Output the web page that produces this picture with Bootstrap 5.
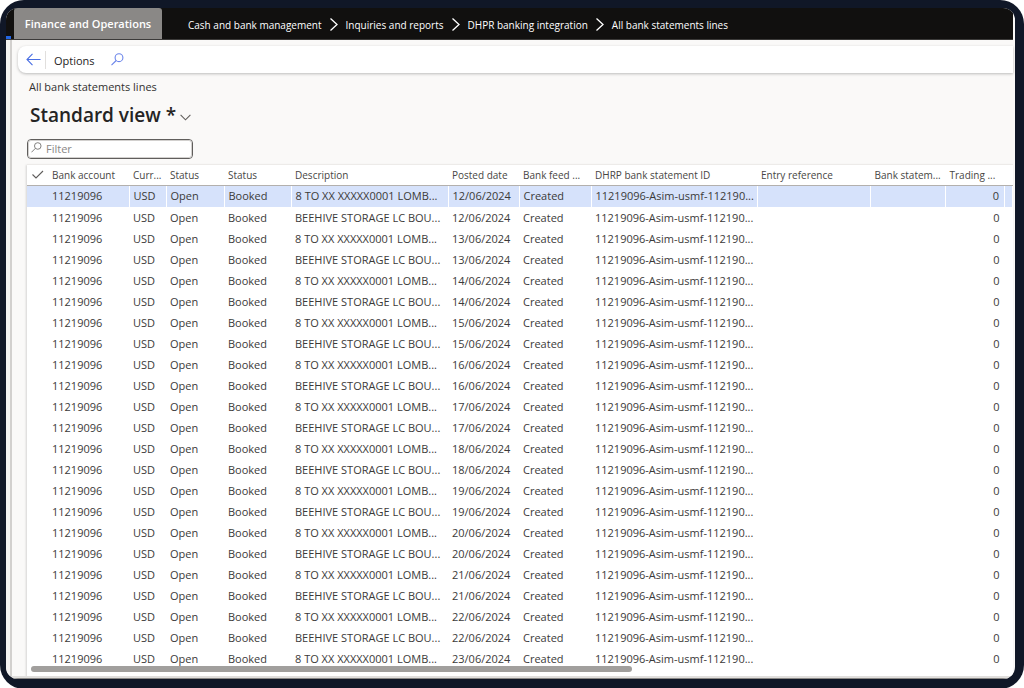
<!DOCTYPE html>
<html lang="en">
<head>
<meta charset="utf-8">
<meta name="viewport" content="width=device-width, initial-scale=1">
<title>All bank statements lines</title>
<link href="https://cdn.jsdelivr.net/npm/bootstrap@5.3.0/dist/css/bootstrap.min.css" rel="stylesheet">
<style>
  body { font-family: "Open Sans", "Noto Sans", sans-serif; font-size: 11px; line-height: 16px; color: #323130; background: #fff; }
  a { color: inherit; text-decoration: none; }
  .device { background: #101727; border-radius: 24px; padding: 8px 9px 10px 6px; }
  .screen { background: #faf9f8; border-radius: 12px; overflow: hidden; }
  .topbar { background: #11100f; color: #fff; height: 32px; margin-right: 2px; border-bottom: 1px solid #3b3a39; }
  .topbar::before { content: ""; width: 5px; height: 3px; margin-right: 3px; align-self: flex-end; background: #2266e3; }
  .app-tab { background: #8a8886; color: #fff; font-size: 11px; font-weight: 600; width: 148px; border-radius: 3px 3px 0 0; }
  .crumbs { margin-left: 26px; font-size: 10px; font-weight: 500; padding-top: 2px; }
  .crumbs li { display: flex; align-items: center; }
  .crumbs svg { margin: 0 7px; }
  .rail { width: 6px; border-right: 2px solid #d2d0ce; background: #f3f2f1; }
  .actions { margin: 6px 2px 0 6px; height: 27px; background: #fff; border-radius: 8px 0 0 8px; box-shadow: 0 1px 3px rgba(0,0,0,.25); }
  .actions .btn { --bs-btn-padding-x: 0px; --bs-btn-padding-y: 0px; --bs-btn-border-width: 0px; line-height: 16px; font-size: 11px; font-weight: 500; color: #252423; }
  .actions .options-btn { padding-top: 2px; }
  .actions .back-btn { width: 28px; border-right: 1px solid #e1dfdd; border-radius: 0; height: 18px; }
  .caption-text { margin: 6px 0 0 17px; }
  .view-name { font-size: 19px; line-height: 28px; font-weight: 600; color: #252423; margin: 6px 0 0 18px; }
  .filter-box { width: 166px; height: 20px; margin: 10px 0 0 15px; border: 1px solid #605e5c; border-radius: 4px; background: #fff; padding: 0 3px; outline: 1px solid #d2d0ce; outline-offset: -2px; }
  .filter-box input { font-size: 11px; color: #323130; line-height: 16px; }
  .filter-box input::placeholder { color: #8a8886; opacity: 1; }
  .grid-card { margin: 5px 2px 0 15px; background: #fff; border-top: 1px solid #edebe9; box-shadow: -1px 1px 2px rgba(0,0,0,.15); padding-bottom: 4px; }
  .lines { table-layout: fixed; width: 100%; --bs-table-bg: transparent; }
  .lines > :not(caption) > * > * { padding: 0 0 0 4px; border: 0; height: 21px; white-space: nowrap; overflow: hidden; color: #3b3a39; }
  .lines > thead > tr > th { font-size: 10px; font-weight: 500; color: #484644; border-bottom: 1px solid #b3b0ad; height: 20px; vertical-align: middle; }
  .lines > tbody > tr.current > td { background: #d6e2fb; border-right: 1px solid #fff; border-bottom: 1px solid #fff; height: 22px; }
  .lines > tbody > tr.current > td:first-child { border-right: 0; }
  .lines > tbody > tr > td.amount { text-align: right; padding-right: 5px; }
  .scroll-thumb { width: 61%; height: 6px; margin: -3px 0 0 4px; background: #a19f9d; border-radius: 3px; position: relative; }
  .bottom-line { height: 3px; background: #e1dfdd; border-bottom: 1px solid #8a8886; }
  .c-check { width: 21px; } .c-acc { width: 81px; } .c-cur { width: 37px; } .c-st { width: 58px; } .c-st2 { width: 67px; }
  .c-desc { width: 157px; } .c-date { width: 71px; } .c-feed { width: 72px; } .c-id { width: 166px; }
  .c-bs { width: 75px; } .c-tr { width: 59px; } .c-end { width: 8px; }
</style>
</head>
<body>
<div class="device min-vh-100 d-flex flex-column">
  <div class="screen flex-grow-1 d-flex flex-column">
    <header class="topbar d-flex align-items-stretch">
      <a href="#" class="app-tab d-flex align-items-center justify-content-center">Finance and Operations</a>
      <nav class="d-flex" aria-label="Breadcrumb">
        <ol class="crumbs list-unstyled d-flex mb-0" id="crumbs"></ol>
      </nav>
    </header>
    <div class="d-flex flex-grow-1">
      <div class="rail flex-shrink-0"></div>
      <main class="flex-grow-1 overflow-hidden">
        <div class="actions d-flex align-items-center">
          <button class="btn back-btn d-flex align-items-center ps-2" aria-label="Back">
            <svg width="15" height="13" viewBox="0 0 15 13" fill="none" stroke="#4a6fe3" stroke-width="1.1"><path d="M14.5 6.5H1M6.5 .8 1 6.5l5.500 5.700"/></svg>
          </button>
          <button class="btn options-btn ms-2">Options</button>
          <button class="btn d-flex ms-3" aria-label="Search">
            <svg width="13" height="13" viewBox="0 0 13 13" fill="none" stroke="#6b85ea" stroke-width="1.1"><circle cx="8" cy="4.700" r="3.900"/><path d="M5.200 7.500.5 12.200"/></svg>
          </button>
        </div>
        <div class="caption-text">All bank statements lines</div>
        <h1 class="view-name d-flex align-items-center mb-0">Standard view *
          <svg class="ms-1 mt-1" width="11" height="7" viewBox="0 0 11 7" fill="none" stroke="#605e5c" stroke-width="1.1"><path d="m.6.800 4.900 5 4.900-5"/></svg>
        </h1>
        <div class="filter-box d-flex align-items-center">
          <svg class="flex-shrink-0 mb-1" width="11" height="11" viewBox="0 0 13 13" fill="none" stroke="#797775" stroke-width="1.1"><circle cx="8" cy="4.700" r="3.900"/><path d="M5.200 7.500.5 12.200"/></svg>
          <input type="text" class="border-0 p-0 ms-1 w-100 bg-transparent" placeholder="Filter" aria-label="Filter">
        </div>
        <div class="grid-card">
          <table class="table lines mb-0 align-middle">
            <colgroup><col class="c-check"><col class="c-acc"><col class="c-cur"><col class="c-st"><col class="c-st2"><col class="c-desc"><col class="c-date"><col class="c-feed"><col class="c-id"><col><col class="c-bs"><col class="c-tr"><col class="c-end"></colgroup>
            <thead><tr>
              <th scope="col"><svg class="d-block" width="13" height="9" viewBox="0 0 13 9" fill="none" stroke="#605e5c" stroke-width="1.1"><path d="M1.500 4.500 5 8l7-7"/></svg></th>
              <th scope="col">Bank account</th><th scope="col">Curr...</th><th scope="col">Status</th><th scope="col">Status</th><th scope="col">Description</th><th scope="col">Posted date</th><th scope="col">Bank feed ...</th><th scope="col">DHRP bank statement ID</th><th scope="col">Entry reference</th><th scope="col">Bank statem...</th><th scope="col">Trading ...</th><th></th>
            </tr></thead>
            <tbody id="rows"></tbody>
          </table>
          <div class="scroll-thumb"></div>
        </div>
      </main>
    </div>
    <div class="bottom-line"></div>
  </div>
</div>
<script src="https://cdn.jsdelivr.net/npm/bootstrap@5.3.0/dist/js/bootstrap.bundle.min.js"></script>
<script>
  const chevron = '<svg width="10" height="15" viewBox="0 0 10 15" fill="none" stroke="#fff" stroke-width="1.3"><path d="m1.500 1.500 6.500 6-6.500 6"/></svg>';
  document.getElementById('crumbs').innerHTML =
    ['Cash and bank management', 'Inquiries and reports', 'DHPR banking integration', 'All bank statements lines']
      .map((t, i) => `<li>${i ? chevron : ''}<a href="#">${t}</a></li>`).join('');

  const descriptions = ['8 TO XX XXXXX0001 LOMB...', 'BEEHIVE STORAGE LC BOU...'];
  let html = '';
  for (let i = 0; i < 23; i++) {
    const date = `${12 + Math.floor(i / 2)}/06/2024`;
    const cells = ['', '11219096', 'USD', 'Open', 'Booked', descriptions[i % 2], date, 'Created', '11219096-Asim-usmf-112190...', '', ''];
    html += `<tr class="${i ? '' : 'current'}">` + cells.map(c => `<td>${c}</td>`).join('') + '<td class="amount">0</td><td></td></tr>';
  }
  document.getElementById('rows').innerHTML = html;
</script>
</body>
</html>
